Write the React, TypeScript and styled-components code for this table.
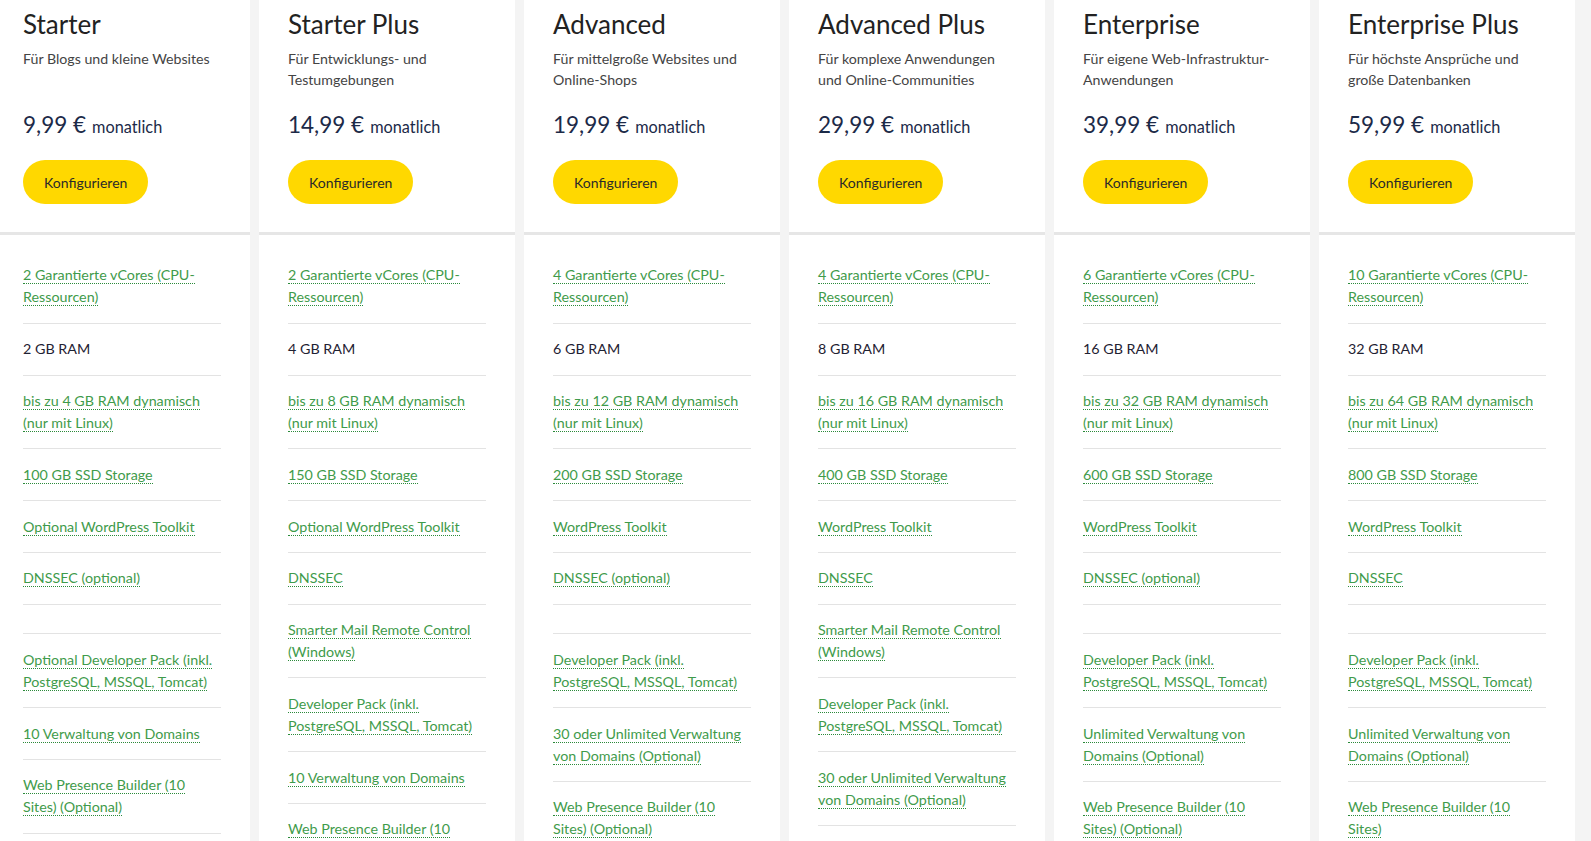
import React from "react";
import styled, { createGlobalStyle } from "styled-components";

const GlobalStyle = createGlobalStyle`
  html, body {
    margin: 0;
    padding: 0;
    background: #f4f4f4;
    overflow: hidden;
  }
  body {
    font-family: Lato, "Open Sans", Arial, sans-serif;
  }
  * { box-sizing: border-box; }
`;

type Feature = { text: string; link?: boolean } | null;

type Plan = {
  name: string;
  desc: string;
  price: string;
  features: Feature[];
};

const L = (text: string): Feature => ({ text, link: true });
const P = (text: string): Feature => ({ text, link: false });

const plans: Plan[] = [
  {
    name: "Starter",
    desc: "Für Blogs und kleine Websites",
    price: "9,99 €",
    features: [
      L("2 Garantierte vCores (CPU-Ressourcen)"),
      P("2 GB RAM"),
      L("bis zu 4 GB RAM dynamisch (nur mit Linux)"),
      L("100 GB SSD Storage"),
      L("Optional WordPress Toolkit"),
      L("DNSSEC (optional)"),
      null,
      L("Optional Developer Pack (inkl. PostgreSQL, MSSQL, Tomcat)"),
      L("10 Verwaltung von Domains"),
      L("Web Presence Builder (10 Sites) (Optional)"),
    ],
  },
  {
    name: "Starter Plus",
    desc: "Für Entwicklungs- und Testumgebungen",
    price: "14,99 €",
    features: [
      L("2 Garantierte vCores (CPU-Ressourcen)"),
      P("4 GB RAM"),
      L("bis zu 8 GB RAM dynamisch (nur mit Linux)"),
      L("150 GB SSD Storage"),
      L("Optional WordPress Toolkit"),
      L("DNSSEC"),
      L("Smarter Mail Remote Control (Windows)"),
      L("Developer Pack (inkl. PostgreSQL, MSSQL, Tomcat)"),
      L("10 Verwaltung von Domains"),
      L("Web Presence Builder (10 Sites)"),
    ],
  },
  {
    name: "Advanced",
    desc: "Für mittelgroße Websites und Online-Shops",
    price: "19,99 €",
    features: [
      L("4 Garantierte vCores (CPU-Ressourcen)"),
      P("6 GB RAM"),
      L("bis zu 12 GB RAM dynamisch (nur mit Linux)"),
      L("200 GB SSD Storage"),
      L("WordPress Toolkit"),
      L("DNSSEC (optional)"),
      null,
      L("Developer Pack (inkl. PostgreSQL, MSSQL, Tomcat)"),
      L("30 oder Unlimited Verwaltung von Domains (Optional)"),
      L("Web Presence Builder (10 Sites) (Optional)"),
    ],
  },
  {
    name: "Advanced Plus",
    desc: "Für komplexe Anwendungen und Online-Communities",
    price: "29,99 €",
    features: [
      L("4 Garantierte vCores (CPU-Ressourcen)"),
      P("8 GB RAM"),
      L("bis zu 16 GB RAM dynamisch (nur mit Linux)"),
      L("400 GB SSD Storage"),
      L("WordPress Toolkit"),
      L("DNSSEC"),
      L("Smarter Mail Remote Control (Windows)"),
      L("Developer Pack (inkl. PostgreSQL, MSSQL, Tomcat)"),
      L("30 oder Unlimited Verwaltung von Domains (Optional)"),
      L("Web Presence Builder (10 Sites)"),
    ],
  },
  {
    name: "Enterprise",
    desc: "Für eigene Web-Infrastruktur-Anwendungen",
    price: "39,99 €",
    features: [
      L("6 Garantierte vCores (CPU-Ressourcen)"),
      P("16 GB RAM"),
      L("bis zu 32 GB RAM dynamisch (nur mit Linux)"),
      L("600 GB SSD Storage"),
      L("WordPress Toolkit"),
      L("DNSSEC (optional)"),
      null,
      L("Developer Pack (inkl. PostgreSQL, MSSQL, Tomcat)"),
      L("Unlimited Verwaltung von Domains (Optional)"),
      L("Web Presence Builder (10 Sites) (Optional)"),
    ],
  },
  {
    name: "Enterprise Plus",
    desc: "Für höchste Ansprüche und große Datenbanken",
    price: "59,99 €",
    features: [
      L("10 Garantierte vCores (CPU-Ressourcen)"),
      P("32 GB RAM"),
      L("bis zu 64 GB RAM dynamisch (nur mit Linux)"),
      L("800 GB SSD Storage"),
      L("WordPress Toolkit"),
      L("DNSSEC"),
      null,
      L("Developer Pack (inkl. PostgreSQL, MSSQL, Tomcat)"),
      L("Unlimited Verwaltung von Domains (Optional)"),
      L("Web Presence Builder (10 Sites)"),
    ],
  },
];

const Grid = styled.div`
  display: grid;
  grid-template-columns: repeat(6, 256px);
  column-gap: 9px;
  margin-left: -6px;
  min-height: 100vh;
`;

const Card = styled.section`
  background: #ffffff;
  display: flex;
  flex-direction: column;
`;

const Header = styled.header`
  padding: 8px 29px 28px;
  border-bottom: 3px solid #e6e6e6;
`;

const Title = styled.h2`
  margin: 0;
  font-size: 26px;
  line-height: 32px;
  font-weight: 400;
  color: #222222;
`;

const Desc = styled.p`
  margin: 8px 0 0;
  min-height: 42px;
  font-size: 14.2px;
  line-height: 21px;
  color: #444444;
`;

const PriceRow = styled.div`
  margin-top: 22px;
  display: flex;
  align-items: baseline;
  gap: 6px;
  color: #1c2a48;
`;

const Amount = styled.span`
  font-size: 22.5px;
  line-height: 26px;
`;

const Period = styled.span`
  font-size: 16.3px;
  line-height: 26px;
`;

const Button = styled.button`
  margin-top: 20px;
  height: 44px;
  padding: 0 21px;
  border: none;
  border-radius: 22px;
  background: #ffd800;
  color: #2a2a2a;
  font-family: inherit;
  font-size: 14px;
  cursor: pointer;
`;

const List = styled.ul`
  list-style: none;
  margin: 0;
  padding: 15px 29px 0;
`;

const Item = styled.li`
  padding: 14.4px 0;
  border-bottom: 1px solid #e3e3e3;
  font-size: 14.3px;
  line-height: 22px;
  color: #1f2233;
`;

const FeatureLink = styled.a`
  color: #3f9b4b;
  text-decoration: none;
  border-bottom: 1px dotted #2b8a3a;
  cursor: pointer;
`;

export default function App() {
  return (
    <>
      <GlobalStyle />
      <Grid>
        {plans.map((plan) => (
          <Card key={plan.name}>
            <Header>
              <Title>{plan.name}</Title>
              <Desc>{plan.desc}</Desc>
              <PriceRow>
                <Amount>{plan.price}</Amount>
                <Period>monatlich</Period>
              </PriceRow>
              <Button>Konfigurieren</Button>
            </Header>
            <List>
              {plan.features.map((f, i) => (
                <Item key={i}>
                  {f === null ? null : f.link ? (
                    <FeatureLink>{f.text}</FeatureLink>
                  ) : (
                    f.text
                  )}
                </Item>
              ))}
            </List>
          </Card>
        ))}
      </Grid>
    </>
  );
}
